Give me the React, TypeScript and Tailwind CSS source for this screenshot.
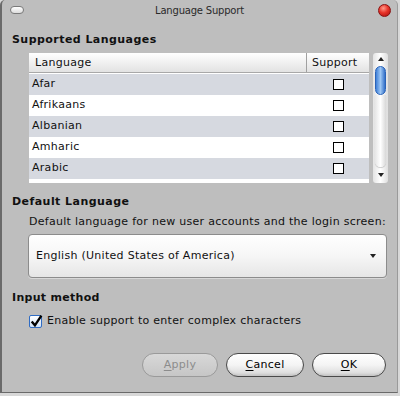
import React from 'react';

const LANGS = ['Afar', 'Afrikaans', 'Albanian', 'Amharic', 'Arabic'];

const font = { fontFamily: '"DejaVu Sans", "Liberation Sans", sans-serif' };

function Btn({ label, mn, disabled }: { label: string; mn: number; disabled?: boolean }) {
  return (
    <div
      className={`flex h-[24px] items-center justify-center rounded-full border bg-gradient-to-b text-[11px] ${
        disabled
          ? 'w-[76px] border-[#9a9a9a] from-[#d8d8d8] to-[#c6c6c6] text-[#8c8c8c]'
          : 'border-[#4a4a4a] from-white via-[#f4f4f4] to-[#d6d6d6] text-black shadow-[inset_0_-2px_2px_rgba(0,0,0,0.08)]'
      }`}
    >
      <span>
        {label.slice(0, mn)}
        <span className="underline underline-offset-2">{label[mn]}</span>
        {label.slice(mn + 1)}
      </span>
    </div>
  );
}

export default function App() {
  return (
    <div className="h-[396px] w-[400px] overflow-hidden bg-[#d8d8d8]" style={font}>
      <div className="flex h-[393px] w-[398px] flex-col rounded-tl-[5px] rounded-tr-[5px] border-l-2 border-r border-b border-l-[#6a6a6a] border-b-[#6a6a6a] border-r-[#9a9a9a] bg-[#bebebe] text-[11px] tracking-[0.28px] text-[#111]">
        {/* Title bar */}
        <div className="relative flex h-[21px] items-center justify-center">
          <div className="absolute left-[8px] top-[6px] h-[8px] w-[14px] rounded-full border border-[#7a7a7a] bg-gradient-to-b from-white to-[#dcdcdc]" />
          <span className="text-[10px] tracking-[-0.2px] text-[#2a2a2a]">Language Support</span>
          <div className="absolute right-[6px] top-[4px] h-[13px] w-[13px] rounded-full border border-[#8a1010] bg-[radial-gradient(circle_at_40%_30%,#ff9a8a_0%,#e8342a_45%,#a40c0c_100%)]" />
        </div>

        {/* Supported Languages */}
        <div className="mt-[12px] pl-[10px] font-bold leading-[14px] tracking-[0.45px]">Supported Languages</div>
        <div className="ml-[27px] mt-[6px] flex h-[130px] w-[359px]">
          <div className="flex w-[340px] flex-col bg-white">
            <div className="flex h-[20px] border-b border-[#a8a8a8] bg-gradient-to-b from-white to-[#e2e2e2]">
              <div className="flex-1 border-r border-[#a0a0a0] pl-[6px] leading-[20px]">Language</div>
              <div className="w-[62px] pl-[5px] leading-[20px]">Support</div>
            </div>
            <div className="h-[1px]" />
            {LANGS.map((l, i) => (
              <div key={l} className={`flex h-[21px] items-center ${i % 2 === 0 ? 'bg-[#d6d9e0]' : 'bg-white'}`}>
                <div className="flex-1 pl-[3px]">{l}</div>
                <div className="flex w-[62px] justify-center">
                  <div className="h-[11px] w-[11px] border border-black bg-white" />
                </div>
              </div>
            ))}
          </div>
          <div className="ml-[4px] flex w-[15px] flex-col items-center rounded-[3px] bg-gradient-to-r from-[#e4e4e4] via-white to-[#dedede]">
            <div className="mt-[4px] h-0 w-0 border-x-[3px] border-b-[4px] border-x-transparent border-b-[#222]" />
            <div className="mt-[5px] h-[29px] w-[11px] rounded-full border border-[#2a63b8] bg-gradient-to-r from-[#3f7fd6] via-[#9cc6f4] to-[#3370c8]" />
            <div className="h-[72px] w-[11px] rounded-b-full bg-gradient-to-r from-[#e6e6e6] via-white to-[#d8d8d8] shadow-[0_1px_1px_rgba(0,0,0,0.2)]" />
            <div className="mt-[6px] h-0 w-0 border-x-[3px] border-t-[4px] border-x-transparent border-t-[#222]" />
          </div>
        </div>

        {/* Default Language */}
        <div className="mt-[12px] pl-[10px] font-bold leading-[14px] tracking-[0.45px]">Default Language</div>
        <div className="mt-[6px] pl-[27px] leading-[14px]">Default language for new user accounts and the login screen:</div>
        <div className="ml-[26px] mt-[5px] flex h-[44px] w-[359px] items-center justify-between rounded-[4px] border border-[#8c8c8c] bg-gradient-to-b from-white via-[#f6f6f6] to-[#e6e6e6] pl-[7px] pr-[10px] shadow-[0_1px_0_#d8d8d8]">
          <span>English (United States of America)</span>
          <div className="h-0 w-0 border-x-[3px] border-t-[4px] border-x-transparent border-t-[#222]" />
        </div>

        {/* Input method */}
        <div className="mt-[13px] pl-[10px] font-bold leading-[14px] tracking-[0.3px]">Input method</div>
        <div className="mt-[8px] flex items-center gap-[5px] pl-[27px]">
          <div className="relative h-[13px] w-[13px] rounded-[2px] border border-[#2f6cc4] bg-gradient-to-b from-white to-[#cfe2f8]">
            <svg viewBox="0 0 13 13" className="absolute -left-[1px] -top-[2px] h-[14px] w-[14px]">
              <path d="M2.5 7 L5.5 10.5 L11.5 1.5" fill="none" stroke="#000" strokeWidth="2.2" />
            </svg>
          </div>
          <span>Enable support to enter complex characters</span>
        </div>

        {/* Buttons */}
        <div className="mt-auto mb-[15px] flex justify-end gap-[8px] pr-[11px]">
          <Btn label="Apply" mn={0} disabled />
          <div className="w-[78px]"><Btn label="Cancel" mn={0} /></div>
          <div className="w-[74px]"><Btn label="OK" mn={0} /></div>
        </div>
      </div>
    </div>
  );
}
